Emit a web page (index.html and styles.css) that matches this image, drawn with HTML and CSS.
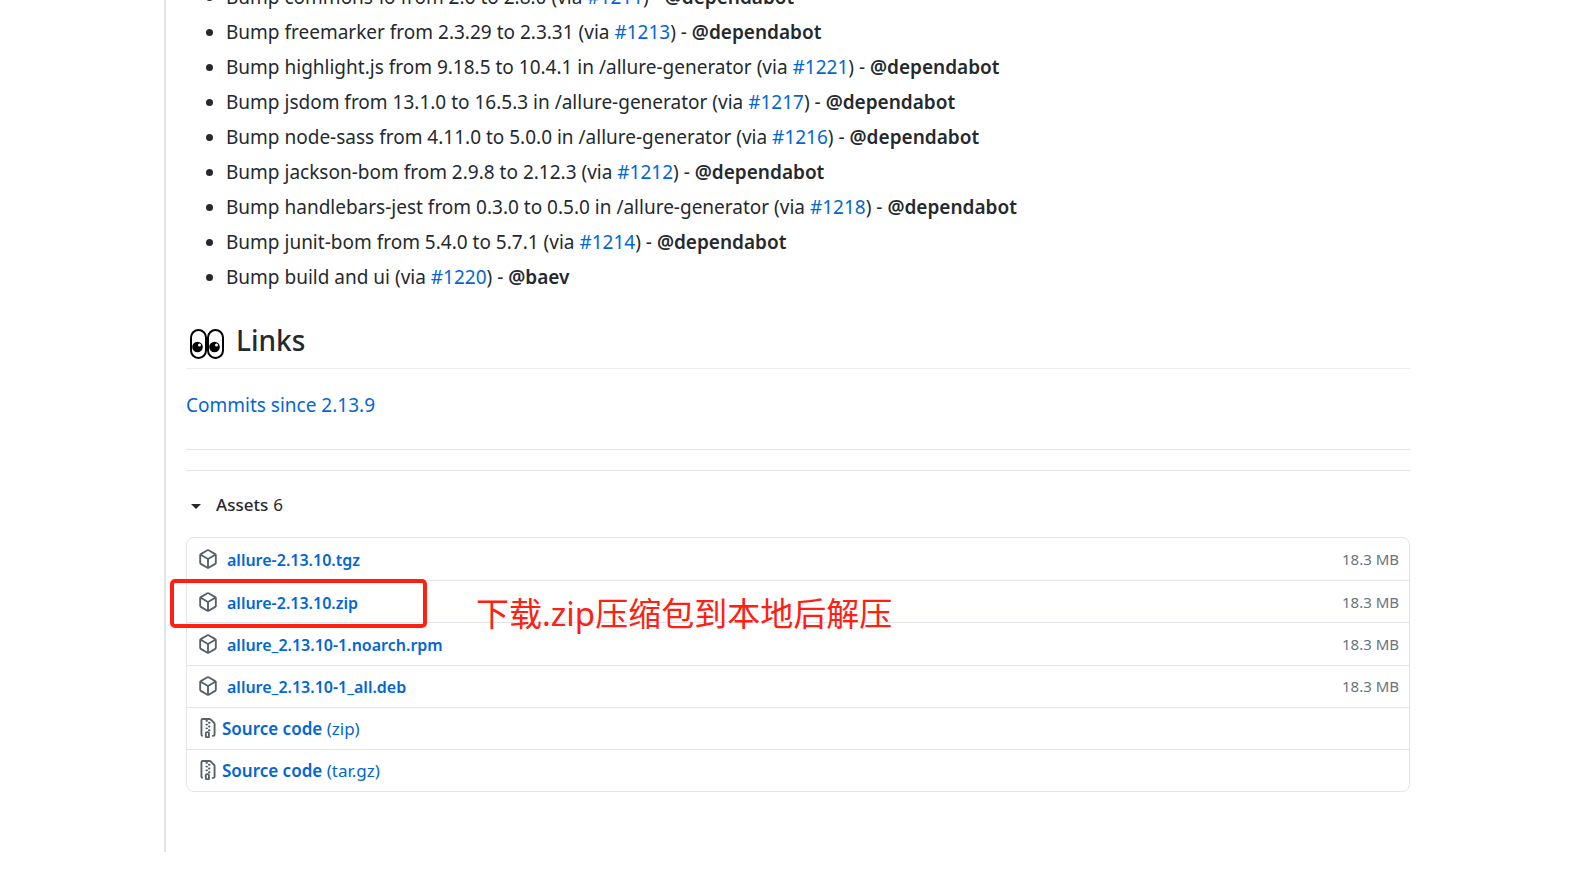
FILE: index.html
```html
<!DOCTYPE html>
<html lang="en">
<head>
    <meta charset="UTF-8">
    <title>allure 2.13.10</title>
    <link rel="stylesheet" href="styles.css">
</head>
<body>
    <svg class="sprite" aria-hidden="true">
        <symbol id="icon-package" viewBox="0 0 16 16">
            <path fill-rule="evenodd" d="M8.878.392a1.75 1.75 0 00-1.756 0l-5.25 3.045A1.75 1.75 0 001 4.951v6.098c0 .624.332 1.2.872 1.514l5.25 3.045a1.75 1.75 0 001.756 0l5.25-3.045c.54-.313.872-.89.872-1.514V4.951c0-.624-.332-1.2-.872-1.514L8.878.392zM7.875 1.69a.25.25 0 01.25 0l4.63 2.685L8 7.133 3.245 4.375l4.63-2.685zM2.5 5.677v5.372c0 .09.047.171.125.216l4.625 2.683V8.432L2.5 5.677zm6.25 8.271l4.625-2.683a.25.25 0 00.125-.216V5.677L8.75 8.432v5.516z"/>
        </symbol>
        <symbol id="icon-zip" viewBox="0 0 16 16">
            <path fill-rule="evenodd" d="M3.5 1.75a.25.25 0 01.25-.25h3a.75.75 0 000 1.5h.5a.75.75 0 000-1.5h2.086a.25.25 0 01.177.073l2.914 2.914a.25.25 0 01.073.177v8.586a.25.25 0 01-.25.25h-.5a.75.75 0 000 1.5h.5A1.75 1.75 0 0014 13.25V4.664c0-.464-.184-.909-.513-1.237L10.573.513A1.75 1.75 0 009.336 0H3.75A1.75 1.75 0 002 1.75v11.5c0 .649.353 1.214.874 1.515a.75.75 0 10.752-1.298.25.25 0 01-.126-.217V1.75zM8.75 3a.75.75 0 000 1.5h.5a.75.75 0 000-1.5h-.5zM6 5.25a.75.75 0 01.75-.75h.5a.75.75 0 010 1.5h-.5A.75.75 0 016 5.25zm2 1.5A.75.75 0 018.75 6h.5a.75.75 0 010 1.5h-.5A.75.75 0 018 6.75zm-1.25.75a.75.75 0 000 1.5h.5a.75.75 0 000-1.5h-.5zM8 9.75A.75.75 0 018.75 9h.5a.75.75 0 010 1.5h-.5A.75.75 0 018 9.75zm-.75.75a1.75 1.75 0 00-1.75 1.75v3c0 .414.336.75.75.75h2.5a.75.75 0 00.75-.75v-3a1.75 1.75 0 00-1.75-1.75h-.5zM7 12.25a.25.25 0 01.25-.25h.5a.25.25 0 01.25.25v2.25H7v-2.25z"/>
        </symbol>
    </svg>

    <main class="release">
        <ul class="changes">
            <li>Bump commons-io from 2.6 to 2.8.0 (via <a href="#">#1211</a>) - <a class="mention" href="#">@dependabot</a></li>
            <li>Bump freemarker from 2.3.29 to 2.3.31 (via <a href="#">#1213</a>) - <a class="mention" href="#">@dependabot</a></li>
            <li>Bump highlight.js from 9.18.5 to 10.4.1 in /allure-generator (via <a href="#">#1221</a>) - <a class="mention" href="#">@dependabot</a></li>
            <li>Bump jsdom from 13.1.0 to 16.5.3 in /allure-generator (via <a href="#">#1217</a>) - <a class="mention" href="#">@dependabot</a></li>
            <li>Bump node-sass from 4.11.0 to 5.0.0 in /allure-generator (via <a href="#">#1216</a>) - <a class="mention" href="#">@dependabot</a></li>
            <li>Bump jackson-bom from 2.9.8 to 2.12.3 (via <a href="#">#1212</a>) - <a class="mention" href="#">@dependabot</a></li>
            <li>Bump handlebars-jest from 0.3.0 to 0.5.0 in /allure-generator (via <a href="#">#1218</a>) - <a class="mention" href="#">@dependabot</a></li>
            <li>Bump junit-bom from 5.4.0 to 5.7.1 (via <a href="#">#1214</a>) - <a class="mention" href="#">@dependabot</a></li>
            <li>Bump build and ui (via <a href="#">#1220</a>) - <a class="mention" href="#">@baev</a></li>
        </ul>

        <h2 class="title">
            <svg class="eyes" viewBox="0 0 36 30" aria-hidden="true">
                <rect x="2" y="1" width="15" height="28" rx="7.5" fill="#fff" stroke="#000" stroke-width="2"/>
                <rect x="19" y="1" width="15" height="28" rx="7.5" fill="#fff" stroke="#000" stroke-width="2"/>
                <circle cx="8.5" cy="18" r="5.3"/>
                <circle cx="25.5" cy="18" r="5.3"/>
                <circle cx="10.5" cy="16" r="1.5" fill="#fff"/>
                <circle cx="27.5" cy="16" r="1.5" fill="#fff"/>
            </svg>
            Links
        </h2>
        <p class="commits"><a href="#">Commits since 2.13.9</a></p>

        <details class="assets" open>
            <summary><span class="caret"></span><b>Assets</b> 6</summary>
            <ul class="files">
                <li>
                    <svg class="icon"><use href="#icon-package"/></svg>
                    <a class="package" href="#">allure-2.13.10.tgz</a>
                    <small>18.3 MB</small>
                </li>
                <li>
                    <svg class="icon"><use href="#icon-package"/></svg>
                    <a class="package" href="#">allure-2.13.10.zip</a>
                    <small>18.3 MB</small>
                    <div class="mark"></div>
                    <div class="note" lang="zh-CN">下载.zip压缩包到本地后解压</div>
                </li>
                <li>
                    <svg class="icon"><use href="#icon-package"/></svg>
                    <a class="package" href="#">allure_2.13.10-1.noarch.rpm</a>
                    <small>18.3 MB</small>
                </li>
                <li>
                    <svg class="icon"><use href="#icon-package"/></svg>
                    <a class="package" href="#">allure_2.13.10-1_all.deb</a>
                    <small>18.3 MB</small>
                </li>
                <li>
                    <svg class="icon"><use href="#icon-zip"/></svg>
                    <a href="#"><b>Source code</b> (zip)</a>
                </li>
                <li>
                    <svg class="icon"><use href="#icon-zip"/></svg>
                    <a href="#"><b>Source code</b> (tar.gz)</a>
                </li>
            </ul>
        </details>
    </main>
</body>
</html>
```

FILE: styles.css
```css
*{
    padding: 0;
    margin: 0;
    box-sizing: border-box;
}
body{
    overflow: hidden;
    background-color: #fff;
    color: #24292e;
    font-family: "Segoe UI", "Noto Sans", "Noto Sans CJK SC", sans-serif;
    font-size: 19px;
    line-height: 30px;
}
a{
    color: #0366d6;
    text-decoration: none;
}
a:hover{
    text-decoration: underline;
}
b{
    font-weight: 600;
}
.sprite{
    display: none;
}
.release{
    margin: 0 161px 0 164px;
    padding: 0 0 60px 20px;
    border-left: 2px solid #e1e4e8;
}

/* change list, scrolled part of the way up */
.changes{
    margin-top: -18px;
    padding-left: 40px;
}
.changes li + li{
    margin-top: 5px;
}
.mention{
    color: #24292e;
    font-weight: 600;
}

.title{
    display: flex;
    align-items: center;
    gap: 11px;
    margin-top: 29px;
    padding-bottom: 9px;
    border-bottom: 1px solid #eaecef;
    font-size: 28px;
    font-weight: 500;
    line-height: 38px;
}
.eyes{
    width: 36px;
    height: 30px;
    margin: 8px 0 0 3px;
}
.commits{
    margin-top: 21px;
    padding-bottom: 29px;
    border-bottom: 1px solid #e1e4e8;
}

/* assets */
.assets{
    margin-top: 20px;
    padding-top: 20px;
    border-top: 1px solid #e1e4e8;
    font-size: 17px;
    line-height: 28px;
}
.assets summary{
    display: flex;
    align-items: center;
    gap: 5px;
    list-style: none;
    cursor: pointer;
}
.assets summary b{
    font-weight: 500;
}
.caret{
    margin: 2px 10px 0 5px;
    border: 5px solid transparent;
    border-top-color: #24292e;
    border-bottom: 0;
}
.files{
    display: grid;
    grid-auto-rows: 1fr;
    min-height: 255px;
    margin-top: 18px;
    border: 1px solid #e1e4e8;
    border-radius: 8px;
    list-style: none;
}
.files li{
    position: relative;
    display: flex;
    align-items: center;
    gap: 4px;
    padding: 0 10px 0 11px;
}
.files li + li{
    border-top: 1px solid #e1e4e8;
}
.files a{
    padding-top: 2px;
}
.files small{
    margin-left: auto;
    color: #6a737d;
    font-size: 15px;
}
.icon{
    width: 20px;
    height: 20px;
    fill: #586069;
}
.files .package{
    padding-left: 5px;
    font-size: 16px;
    font-weight: 600;
}

/* red frame and hint over the zip row */
.mark{
    position: absolute;
    top: -2px;
    left: -17px;
    width: 257px;
    height: 49px;
    border: 4px solid #ff2011;
    border-radius: 5px;
    z-index: 1;
}
.note{
    position: absolute;
    top: 9px;
    left: 289px;
    color: #ff2011;
    font-size: 33px;
    line-height: 48px;
    white-space: nowrap;
    z-index: 1;
}
```
